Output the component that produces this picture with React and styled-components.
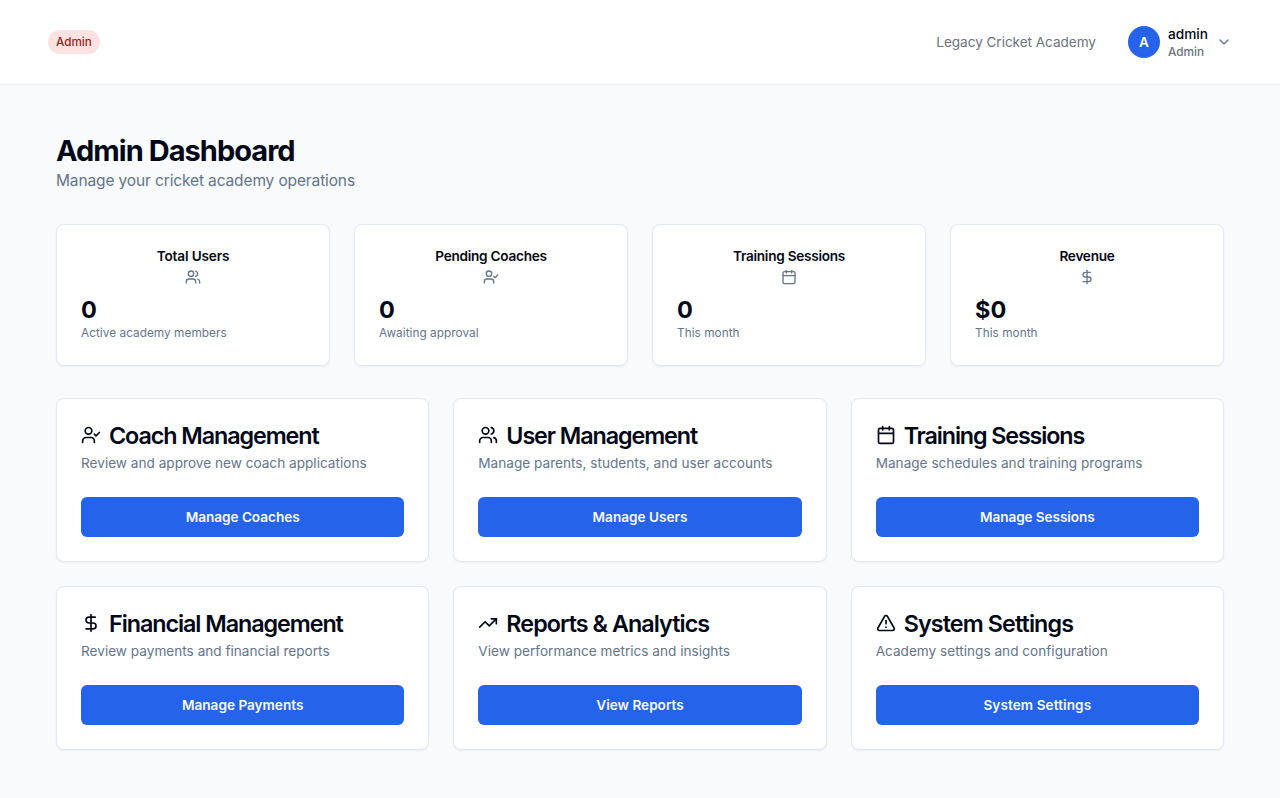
import React from "react";
import styled, { createGlobalStyle } from "styled-components";
import { Users, UserCheck, Calendar, DollarSign, TrendingUp, TriangleAlert, ChevronDown } from "lucide-react";

const GlobalStyle = createGlobalStyle`
  *, *::before, *::after { box-sizing: border-box; }
  body {
    margin: 0;
    background: #f8fafc;
    color: #020817;
    font-family: Inter, "Liberation Sans", sans-serif;
  }
  h1, h3, p { margin: 0; }
`;

const Page = styled.div`
  min-height: 798px;
  background: #f8fafc;
`;

const Header = styled.header`
  display: flex;
  align-items: center;
  justify-content: space-between;
  height: 84px;
  padding: 0 48px;
  background: #fff;
  box-shadow: 0 1px 2px rgba(0, 0, 0, 0.06);
`;

const Badge = styled.span`
  height: 24px;
  padding: 0 8px;
  border-radius: 12px;
  background: #fee2e2;
  color: #991b1b;
  font-size: 11.7px;
  font-weight: 500;
  line-height: 24px;
`;

const HeaderRight = styled.div`
  display: flex;
  align-items: center;
  gap: 32px;
`;

const AcademyName = styled.span`
  color: #6b7280;
  font-size: 13.6px;
  line-height: 20px;
  letter-spacing: -0.05px;
`;

const UserMenu = styled.div`
  display: flex;
  align-items: center;
  gap: 8px;
  color: #6b7280;
`;

const Avatar = styled.div`
  width: 32px;
  height: 32px;
  border-radius: 50%;
  background: #2563eb;
  color: #fff;
  font-size: 13.6px;
  font-weight: 600;
  line-height: 32px;
  text-align: center;
`;

const UserText = styled.div`
  display: flex;
  flex-direction: column;
`;

const UserName = styled.span`
  color: #020817;
  font-size: 13.7px;
  font-weight: 500;
  line-height: 20px;
`;

const UserRole = styled.span`
  font-size: 11.8px;
  font-weight: 500;
  line-height: 16px;
`;

const Main = styled.main`
  padding: 49px 56px 48px;
`;

const Title = styled.h1`
  font-size: 29px;
  font-weight: 700;
  line-height: 36px;
  letter-spacing: -0.97px;
`;

const Subtitle = styled.p`
  margin-bottom: -1px;
  color: #64748b;
  font-size: 15.5px;
  line-height: 24px;
  letter-spacing: -0.13px;
`;

const Grid = styled.div`
  display: grid;
  grid-template-columns: repeat(${(p) => p.$columns}, 1fr);
  gap: 24px;
  margin-top: 32px;
`;

const Card = styled.section`
  padding: 24px;
  border: 1px solid #e2e8f0;
  border-radius: 8px;
  background: #fff;
  box-shadow: 0 1px 2px rgba(0, 0, 0, 0.05);
`;

const StatHead = styled.div`
  display: flex;
  flex-direction: column;
  align-items: center;
  gap: 6px;
  margin-bottom: 8px;
  color: #64748b;
`;

const StatTitle = styled.h3`
  color: #020817;
  font-size: 13.6px;
  font-weight: 600;
  line-height: 14px;
  letter-spacing: ${(p) => p.$tracking ?? -0.25}px;
`;

const StatValue = styled.div`
  padding-top: 2px;
  font-size: 23.5px;
  font-weight: 700;
  line-height: 30px;
`;

const StatNote = styled.p`
  color: #64748b;
  font-size: 11.8px;
  line-height: 16px;
  letter-spacing: 0.04px;
`;

const ActionTitle = styled.h3`
  display: flex;
  align-items: center;
  gap: 8px;
  height: 24px;
  font-size: 23.3px;
  font-weight: 600;
  line-height: 24px;
  letter-spacing: ${(p) => p.$tracking}px;
`;

const ActionLabel = styled.span`
  padding-top: 2px;
`;

const ActionNote = styled.p`
  margin-top: 6px;
  color: #64748b;
  font-size: 13.6px;
  line-height: 20px;
  letter-spacing: 0.01px;
`;

const Button = styled.button`
  display: block;
  width: 100%;
  height: 40px;
  margin-top: 24px;
  padding: 0;
  border: 0;
  border-radius: 6px;
  background: #2563eb;
  color: #f8fafc;
  font: 600 13.6px/20px Inter, "Liberation Sans", sans-serif;
  letter-spacing: ${(p) => p.$tracking ?? 0}px;
`;

const stats = [
  { title: "Total Users", icon: Users, value: "0", note: "Active academy members", tracking: -0.15 },
  { title: "Pending Coaches", icon: UserCheck, value: "0", note: "Awaiting approval" },
  { title: "Training Sessions", icon: Calendar, value: "0", note: "This month" },
  { title: "Revenue", icon: DollarSign, value: "$0", note: "This month" },
];

const actions = [
  { title: "Coach Management", icon: UserCheck, note: "Review and approve new coach applications", button: "Manage Coaches", tracking: -1.07, buttonTracking: -0.04 },
  { title: "User Management", icon: Users, note: "Manage parents, students, and user accounts", button: "Manage Users", tracking: -1.08 },
  { title: "Training Sessions", icon: Calendar, note: "Manage schedules and training programs", button: "Manage Sessions", tracking: -1.12, buttonTracking: -0.08 },
  { title: "Financial Management", icon: DollarSign, note: "Review payments and financial reports", button: "Manage Payments", tracking: -1.05 },
  { title: "Reports & Analytics", icon: TrendingUp, note: "View performance metrics and insights", button: "View Reports", tracking: -0.94 },
  { title: "System Settings", icon: TriangleAlert, note: "Academy settings and configuration", button: "System Settings", tracking: -0.88, buttonTracking: 0.08 },
];

export default function App() {
  return (
    <Page>
      <GlobalStyle />
      <Header>
        <Badge>Admin</Badge>
        <HeaderRight>
          <AcademyName>Legacy Cricket Academy</AcademyName>
          <UserMenu>
            <Avatar>A</Avatar>
            <UserText>
              <UserName>admin</UserName>
              <UserRole>Admin</UserRole>
            </UserText>
            <ChevronDown size={16} />
          </UserMenu>
        </HeaderRight>
      </Header>
      <Main>
        <Title>Admin Dashboard</Title>
        <Subtitle>Manage your cricket academy operations</Subtitle>
        <Grid $columns={4}>
          {stats.map(({ title, icon: Icon, value, note, tracking }) => (
            <Card key={title}>
              <StatHead>
                <StatTitle $tracking={tracking}>{title}</StatTitle>
                <Icon size={16} />
              </StatHead>
              <StatValue>{value}</StatValue>
              <StatNote>{note}</StatNote>
            </Card>
          ))}
        </Grid>
        <Grid $columns={3}>
          {actions.map(({ title, icon: Icon, note, button, tracking, buttonTracking }) => (
            <Card key={title}>
              <ActionTitle $tracking={tracking}>
                <Icon size={20} />
                <ActionLabel>{title}</ActionLabel>
              </ActionTitle>
              <ActionNote>{note}</ActionNote>
              <Button $tracking={buttonTracking}>{button}</Button>
            </Card>
          ))}
        </Grid>
      </Main>
    </Page>
  );
}
